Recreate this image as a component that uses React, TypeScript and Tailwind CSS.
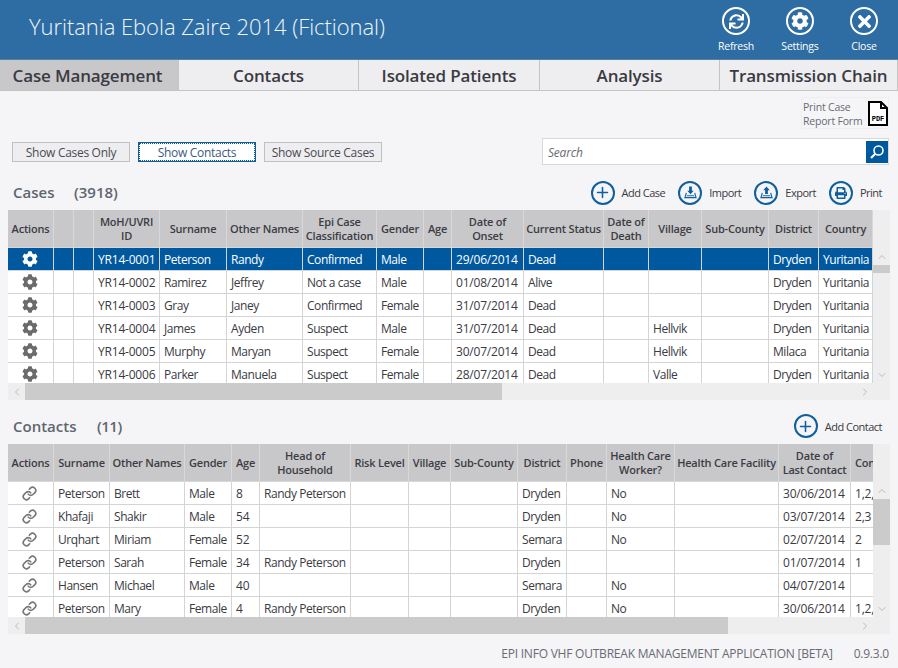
import React from "react";
import { FaCog, FaSync, FaTimes, FaPrint } from "react-icons/fa";
import { ChevronUp, ChevronDown, ChevronLeft, ChevronRight, Plus, Link } from "lucide-react";

const FONT = "font-['Open_Sans','Noto_Sans',sans-serif]";

type Col = { w: string; label: React.ReactNode };

const caseCols: Col[] = [
  { w: "w-[46px]", label: "Actions" },
  { w: "w-[20px]", label: "" },
  { w: "w-[20px]", label: "" },
  { w: "w-[66px]", label: <>MoH/UVRI<br />ID</> },
  { w: "w-[67px]", label: "Surname" },
  { w: "w-[76px]", label: "Other Names" },
  { w: "w-[74px]", label: <>Epi Case<br />Classification</> },
  { w: "w-[47px]", label: "Gender" },
  { w: "w-[28px]", label: "Age" },
  { w: "w-[72px]", label: <>Date of<br />Onset</> },
  { w: "w-[80px]", label: "Current Status" },
  { w: "w-[45px]", label: <>Date of<br />Death</> },
  { w: "w-[53px]", label: "Village" },
  { w: "w-[67px]", label: "Sub-County" },
  { w: "w-[50px]", label: "District" },
  { w: "w-[54px]", label: "Country" },
];

const caseRows: string[][] = [
  ["", "", "YR14-0001", "Peterson", "Randy", "Confirmed", "Male", "", "29/06/2014", "Dead", "", "", "", "Dryden", "Yuritania"],
  ["", "", "YR14-0002", "Ramirez", "Jeffrey", "Not a case", "Male", "", "01/08/2014", "Alive", "", "", "", "Dryden", "Yuritania"],
  ["", "", "YR14-0003", "Gray", "Janey", "Confirmed", "Female", "", "31/07/2014", "Dead", "", "", "", "Dryden", "Yuritania"],
  ["", "", "YR14-0004", "James", "Ayden", "Suspect", "Male", "", "31/07/2014", "Dead", "", "Hellvik", "", "Dryden", "Yuritania"],
  ["", "", "YR14-0005", "Murphy", "Maryan", "Suspect", "Female", "", "30/07/2014", "Dead", "", "Hellvik", "", "Milaca", "Yuritania"],
  ["", "", "YR14-0006", "Parker", "Manuela", "Suspect", "Female", "", "28/07/2014", "Dead", "", "Valle", "", "Dryden", "Yuritania"],
];

const contactCols: Col[] = [
  { w: "w-[46px]", label: "Actions" },
  { w: "w-[56px]", label: "Surname" },
  { w: "w-[75px]", label: "Other Names" },
  { w: "w-[47px]", label: "Gender" },
  { w: "w-[28px]", label: "Age" },
  { w: "w-[91px]", label: <>Head of<br />Household</> },
  { w: "w-[58px]", label: "Risk Level" },
  { w: "w-[42px]", label: "Village" },
  { w: "w-[67px]", label: "Sub-County" },
  { w: "w-[49px]", label: "District" },
  { w: "w-[40px]", label: "Phone" },
  { w: "w-[68px]", label: <>Health Care<br />Worker?</> },
  { w: "w-[104px]", label: "Health Care Facility" },
  { w: "w-[72px]", label: <>Date of<br />Last Contact</> },
  { w: "w-[79px]", label: <span className="block pl-[4px] text-left">Contact Type</span> },
];

const contactRows: string[][] = [
  ["Peterson", "Brett", "Male", "8", "Randy Peterson", "", "", "", "Dryden", "", "No", "", "30/06/2014", "1,2,3"],
  ["Khafaji", "Shakir", "Male", "54", "", "", "", "", "Dryden", "", "No", "", "03/07/2014", "2,3"],
  ["Urqhart", "Miriam", "Female", "52", "", "", "", "", "Semara", "", "No", "", "02/07/2014", "2"],
  ["Peterson", "Sarah", "Female", "34", "Randy Peterson", "", "", "", "Dryden", "", "", "", "01/07/2014", "1"],
  ["Hansen", "Michael", "Male", "40", "", "", "", "", "Semara", "", "No", "", "04/07/2014", ""],
  ["Peterson", "Mary", "Female", "4", "Randy Peterson", "", "", "", "Dryden", "", "No", "", "30/06/2014", "1,2,3"],
];

function DataTable({
  cols,
  rows,
  icon,
  selected,
  width,
}: {
  cols: Col[];
  rows: string[][];
  icon: React.ReactNode;
  selected?: number;
  width: string;
}) {
  return (
    <table className={`table-fixed border-separate border-spacing-0 ${width}`}>
      <colgroup>
        {cols.map((c, i) => (
          <col key={i} className={c.w} />
        ))}
      </colgroup>
      <thead>
        <tr className="h-[38px]">
          {cols.map((c, i) => (
            <th
              key={i}
              className="overflow-hidden border-r border-b border-[#d8d8d8] bg-[#c8c8ca] p-0 text-center text-[11px] leading-[14px] font-semibold tracking-[-0.2px] whitespace-nowrap text-[#3c3c44]"
            >
              {c.label}
            </th>
          ))}
        </tr>
      </thead>
      <tbody>
        {rows.map((r, ri) => {
          const sel = ri === selected;
          return (
            <tr key={ri} className={`h-[23px] ${sel ? "bg-[#00589f] font-medium text-white" : "bg-white text-[#3a3a42]"}`}>
              <td className="border-r border-b border-[#d4d4d4] p-0">
                <div className={`flex justify-center pr-[2px] text-[16px] ${sel ? "text-white" : "text-[#6b6b6b]"}`}>{icon}</div>
              </td>
              {r.map((v, ci) => (
                <td
                  key={ci}
                  className={`overflow-hidden border-r border-b border-[#d4d4d4] pt-[2px] pr-0 pb-0 pl-[4px] text-[12px] leading-[14px] whitespace-nowrap ${
                    /\d/.test(v) ? "tracking-[-0.2px]" : "tracking-[-0.45px]"
                  }`}
                >
                  {v}
                </td>
              ))}
            </tr>
          );
        })}
      </tbody>
    </table>
  );
}

function VScroll({ thumb }: { thumb: string }) {
  return (
    <div className="flex w-[17px] flex-col bg-[#eeeeee]">
      <div className="h-[38px]" />
      <div className="flex h-[17px] items-center justify-center text-[#aaaaaa]">
        <ChevronUp size={12} strokeWidth={1.5} />
      </div>
      <div className={`${thumb} bg-[#cbcbcb]`} />
      <div className="flex-1" />
      <div className="flex h-[17px] items-center justify-center text-[#aaaaaa]">
        <ChevronDown size={12} strokeWidth={1.5} />
      </div>
    </div>
  );
}

function HScroll({ thumb }: { thumb: string }) {
  return (
    <div className="flex h-[17px] bg-[#eeeeee]">
      <div className="flex w-[17px] items-center justify-center text-[#aaaaaa]">
        <ChevronLeft size={12} strokeWidth={1.5} />
      </div>
      <div className={`${thumb} bg-[#cbcbcb]`} />
      <div className="flex-1" />
      <div className="mr-[17px] flex w-[17px] items-center justify-center text-[#aaaaaa]">
        <ChevronRight size={12} strokeWidth={1.5} />
      </div>
    </div>
  );
}

function Circle({ children, size, cls }: { children: React.ReactNode; size: string; cls: string }) {
  return <div className={`flex shrink-0 items-center justify-center rounded-full ${size} ${cls}`}>{children}</div>;
}

function HeaderBtn({ icon, label }: { icon: React.ReactNode; label: string }) {
  return (
    <div className="flex w-[64px] flex-col items-center">
      <Circle size="h-[28px] w-[28px]" cls="border-[2px] border-white text-white">
        {icon}
      </Circle>
      <span className="mt-[4px] text-[10.5px] leading-[14px] tracking-[-0.2px] text-white">{label}</span>
    </div>
  );
}

function Action({ icon, label }: { icon: React.ReactNode; label: string }) {
  return (
    <div className="flex items-center gap-[7px]">
      <Circle size="h-[24px] w-[24px]" cls="border-[2px] border-[#0f5f9e] text-[#0f5f9e]">
        {icon}
      </Circle>
      <span className="pt-[2px] text-[11px] tracking-[-0.5px] text-[#3a3a42]">{label}</span>
    </div>
  );
}

const Tray = ({ up }: { up?: boolean }) => (
  <svg width="13" height="13" viewBox="0 0 14 14" fill="none">
    <path d="M2.5 7.5 L1 12.5 H13 L11.5 7.5" stroke="currentColor" strokeWidth="1.2" />
    <rect x="3" y="10" width="8" height="1" fill="currentColor" />
    {up ? (
      <path d="M7 0.5 L10.5 4.5 H8.5 V8.5 H5.5 V4.5 H3.5 Z" fill="currentColor" />
    ) : (
      <path d="M7 9 L3.5 5 H5.5 V0.5 H8.5 V5 H10.5 Z" fill="currentColor" />
    )}
  </svg>
);

const Tab = ({ label, active, w }: { label: string; active?: boolean; w: string }) => (
  <div
    className={`flex h-full items-center justify-center border-r border-[#c4c4c4] pt-[1px] text-[17px] font-semibold tracking-[-0.15px] text-[#3a3a42] ${w} ${
      active ? "bg-[#c8c8ca] pr-[3px]" : "bg-[#eeeef0]"
    }`}
  >
    {label}
  </div>
);

const FilterBtn = ({ label, active }: { label: string; active?: boolean }) => (
  <div
    className={`flex h-[20px] w-[118px] items-center justify-center pt-[2px] text-[12px] tracking-[-0.3px] ${
      active
        ? "border border-[#0f5f9e] bg-white text-[#3a5a80] outline-1 -outline-offset-2 outline-[#0f5f9e] outline-dotted"
        : "border border-[#c0c0c0] bg-[#eeeef0] text-[#4a4a52]"
    }`}
  >
    {label}
  </div>
);

export default function App() {
  return (
    <div className={`${FONT} h-[668px] w-[898px] overflow-hidden bg-[#f5f5f8]`}>
      {/* Header */}
      <header className="flex h-[60px] items-start justify-between border-b border-[#5c7f9e] bg-[#2e6da3] pr-[2px] pl-[29px]">
        <h1 className="flex h-[53px] items-center text-[22px] font-light tracking-[-0.05px] whitespace-nowrap text-[#f0f6fb]">
          Yuritania Ebola Zaire 2014 (Fictional)
        </h1>
        <div className="flex pt-[7px]">
          <HeaderBtn label="Refresh" icon={<FaSync size={15} />} />
          <HeaderBtn label="Settings" icon={<FaCog size={18} />} />
          <HeaderBtn label="Close" icon={<FaTimes size={19} />} />
        </div>
      </header>

      {/* Tabs */}
      <nav className="flex h-[31px] border-b border-[#c4c4c4]">
        <Tab label="Case Management" active w="w-[179px]" />
        <Tab label="Contacts" w="w-[180px]" />
        <Tab label="Isolated Patients" w="w-[181px]" />
        <Tab label="Analysis" w="w-[180px]" />
        <Tab label="Transmission Chain" w="w-[178px]" />
      </nav>

      {/* Report form */}
      <div className="flex justify-end pt-[6px] pr-[9px]">
        <div className="flex h-[32px] w-[88px] items-center justify-between border border-[#eeeeee] pt-[1px] pl-[1px]">
          <span className="text-[10.5px] leading-[14px] tracking-[-0.2px] text-[#6a6a72]">
            Print Case
            <br />
            Report Form
          </span>
          <svg width="20" height="25" viewBox="0 0 20 25">
            <path d="M1 1 H13 L19 7 V24 H1 Z" fill="#fff" stroke="#000" strokeWidth="2" />
            <path d="M13 1 V7 H19" fill="none" stroke="#000" strokeWidth="2" />
            <text x="10" y="20" textAnchor="middle" fontSize="7" fontWeight="700" fontFamily="Liberation Mono, monospace" fill="#000">
              PDF
            </text>
          </svg>
        </div>
      </div>

      {/* Filters + search */}
      <div className="flex items-center justify-between pt-[9px] pr-[9px] pl-[12px]">
        <div className="flex gap-[8px]">
          <FilterBtn label="Show Cases Only" />
          <FilterBtn label="Show Contacts" active />
          <FilterBtn label="Show Source Cases" />
        </div>
        <div className="flex h-[27px] w-[347px] items-center border border-[#d8d8d8] bg-white pl-[5px]">
          <span className="flex-1 pt-[3px] text-[12px] tracking-[-0.2px] text-[#6a6a72] italic">Search</span>
          <div className="flex h-[22px] w-[22px] items-center justify-center bg-[#00589f]">
            <svg width="16" height="16" viewBox="0 0 16 16" fill="none" stroke="#fff">
              <circle cx="9.5" cy="6.5" r="4.5" strokeWidth="1.6" />
              <path d="M6 10 L2 14" strokeWidth="2.2" />
            </svg>
          </div>
        </div>
      </div>

      {/* Cases */}
      <div className="flex h-[45px] items-center justify-between pt-[10px] pr-[16px] pl-[13px]">
        <div className="flex text-[15px] font-semibold text-[#5f666e]">
          <span className="w-[61px]">Cases</span>
          <span>(3918)</span>
        </div>
        <div className="flex items-center gap-[13px]">
          <Action label="Add Case" icon={<Plus size={17} strokeWidth={2.2} />} />
          <Action label="Import" icon={<Tray />} />
          <Action label="Export" icon={<Tray up />} />
          <Action label="Print" icon={<FaPrint size={12} />} />
        </div>
      </div>

      <div className="mx-[8px] w-[882px]">
        <div className="flex">
          <div className="h-[173px] w-[865px] overflow-hidden">
            <DataTable cols={caseCols} rows={caseRows} icon={<FaCog />} selected={0} width="w-[865px]" />
          </div>
          <VScroll thumb="h-[8px]" />
        </div>
        <HScroll thumb="w-[477px]" />
      </div>

      {/* Contacts */}
      <div className="flex h-[44px] items-center justify-between pt-[8px] pr-[16px] pl-[13px]">
        <div className="flex text-[15px] font-semibold text-[#5f666e]">
          <span className="w-[84px]">Contacts</span>
          <span className="tracking-[-0.5px]">(11)</span>
        </div>
        <Action label="Add Contact" icon={<Plus size={17} strokeWidth={2.2} />} />
      </div>

      <div className="mx-[8px] w-[882px]">
        <div className="flex">
          <div className="h-[173px] w-[865px] overflow-hidden">
            <DataTable
              cols={contactCols}
              rows={contactRows}
              icon={<Link size={15} strokeWidth={2.6} className="text-[#777777]" />}
              width="w-[882px]"
            />
          </div>
          <VScroll thumb="h-[46px]" />
        </div>
        <HScroll thumb="w-[703px]" />
      </div>

      {/* Footer */}
      <footer className="flex justify-end pt-[11px] pr-[9px] text-[12px] tracking-[-0.22px] text-[#6a6a72]">
        <span>EPI INFO VHF OUTBREAK MANAGEMENT APPLICATION [BETA]</span>
        <span className="ml-[21px]">0.9.3.0</span>
      </footer>
    </div>
  );
}
